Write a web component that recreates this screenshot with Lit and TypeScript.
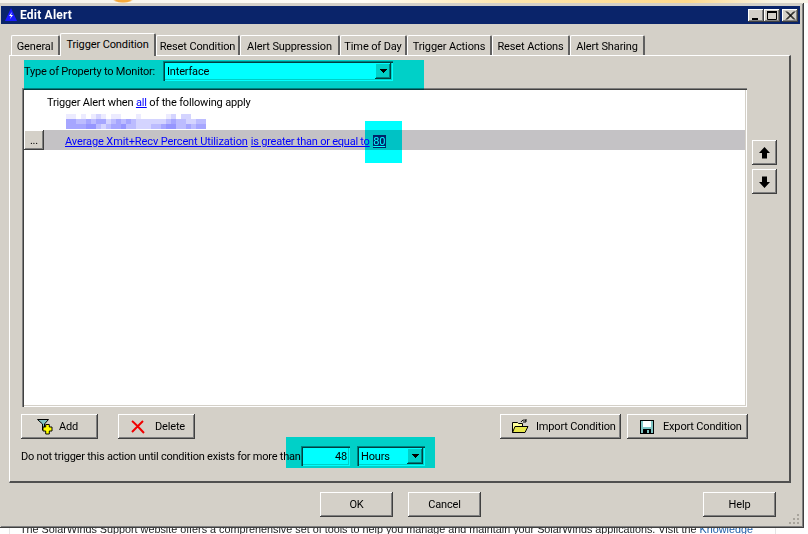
import { LitElement, html, css, svg } from "lit";
import { customElement } from "lit/decorators.js";

const TABS = [
  { label: "General", w: 49 },
  { label: "Trigger Condition", w: 96, active: true },
  { label: "Reset Condition", w: 84 },
  { label: "Alert Suppression", w: 100 },
  { label: "Time of Day", w: 67 },
  { label: "Trigger Actions", w: 85 },
  { label: "Reset Actions", w: 78 },
  { label: "Alert Sharing", w: 75 },
];

const SHADES: Record<string, string> = {
  ".": "#ffffff",
  a: "#ecebff",
  b: "#d4d4ff",
  c: "#bcbcff",
  d: "#a6a6ff",
  e: "#9696ff",
};
const MOSAIC = [
  "aa.a.aba.aa...a.....ab.bb...",
  "ddccdcddbcdcdcbbbbbbcdccbbcc",
  "ddddeecbcddeccbbbccdeeccdcdd",
];

const arrowDown = svg`<path d="M0 0h7v1h-1v1h-1v1h-1v1h-1v-1h-1v-1h-1v-1h-1z" fill="#000"/>`;

@customElement("app-root")
export class AppRoot extends LitElement {
  static styles = css`
    :host {
      display: block;
      position: relative;
      width: 808px;
      height: 534px;
      overflow: hidden;
      background: #fefefe;
      font-family: Roboto, "Liberation Sans", Arial, sans-serif;
      font-size: 11px;
      letter-spacing: -0.17px;
      color: #000;
    }
    .strip {
      height: 3px;
      background:
        radial-gradient(ellipse 10px 3px at 123px 0, #f6a93a 0 70%, transparent 100%),
        linear-gradient(90deg, #f4f1ea 0, #fffdf7 45%, #fde6ae 62%, #fed98c 85%, #f8f3e6 96%);
    }
    .window {
      box-sizing: border-box;
      width: 804px;
      height: 525px;
      padding: 3px 4px 0 1px;
      background: #d4d0c8;
      position: relative;
      box-shadow:
        inset -1px -1px #404040,
        inset 1px 0 #d4d0c8,
        inset 0 1px #d4d0c8,
        inset -2px -2px #808080;
    }
    .title {
      height: 18px;
      background: #0a246a;
      color: #fff;
      display: flex;
      align-items: center;
      padding-left: 4px;
      font-weight: bold;
      font-size: 12px;
      letter-spacing: 0.2px;
    }
    .title-text {
      margin-left: 3px;
    }
    .controls {
      margin-left: auto;
      margin-right: 2px;
      display: flex;
    }
    .ctl {
      width: 16px;
      height: 13px;
      display: flex;
    }
    .ctl.close {
      margin-left: 2px;
    }
    .raised {
      background: #d4d0c8;
      box-shadow:
        inset -1px -1px #404040,
        inset 1px 1px #ffffff,
        inset -2px -2px #808080;
    }
    .sunken {
      box-shadow:
        inset 1px 1px #808080,
        inset 2px 2px #404040,
        inset -1px -1px #ffffff,
        inset -2px -2px #d4d0c8;
    }
    .tabs {
      display: flex;
      align-items: flex-end;
      height: 22px;
      margin: 9px 0 0 10px;
      letter-spacing: -0.12px;
    }
    .tab {
      box-sizing: border-box;
      height: 20px;
      display: flex;
      align-items: center;
      justify-content: center;
      background: #d4d0c8;
      border-top: 1px solid #fff;
      border-left: 1px solid #fff;
      border-right: 2px solid #606060;
      border-top-left-radius: 2px;
      border-top-right-radius: 2px;
      white-space: nowrap;
      padding-top: 1px;
    }
    .tab.active {
      height: 23px;
      margin-bottom: -1px;
      position: relative;
      z-index: 1;
      padding-bottom: 3px;
    }
    .panel {
      box-sizing: border-box;
      width: 782px;
      height: 428px;
      margin-left: 8px;
      padding: 5px 0 0 12px;
      border-top: 1px solid #fff;
      border-left: 1px solid #fff;
      border-right: 2px solid #505050;
      border-bottom: 2px solid #505050;
    }
    .type-row {
      display: flex;
      align-items: center;
      height: 20px;
      margin-left: 2px;
    }
    .type-label {
      width: 139px;
      white-space: nowrap;
      letter-spacing: -0.2px;
    }
    .field {
      box-sizing: border-box;
      height: 20px;
      background: #fff;
      display: flex;
      align-items: center;
      padding: 0 2px 0 4px;
    }
    .combo-type {
      width: 230px;
    }
    .combo-unit {
      width: 68px;
      margin-left: 7px;
    }
    .drop {
      margin-left: auto;
      width: 16px;
      height: 16px;
      display: flex;
      align-items: center;
      justify-content: center;
    }
    .middle {
      display: flex;
      margin-top: 7px;
    }
    .list {
      box-sizing: border-box;
      width: 725px;
      height: 319px;
      padding: 2px;
      background: #fff;
    }
    .line {
      box-sizing: border-box;
      height: 22px;
      padding: 2px 0 0 23px;
      display: flex;
      align-items: center;
      white-space: nowrap;
    }
    a {
      color: #0000ff;
      text-decoration: underline;
    }
    .mosaic {
      height: 18px;
      padding: 2px 0 0 42px;
      box-sizing: border-box;
      display: grid;
      grid-template-columns: repeat(28, 5px);
      grid-auto-rows: 5px;
    }
    .rule-row {
      height: 20px;
      display: flex;
      align-items: center;
      background: #c4c2c5;
      white-space: nowrap;
    }
    .rule-text {
      display: flex;
      padding-top: 3px;
    }
    .more {
      box-sizing: border-box;
      width: 20px;
      height: 20px;
      display: flex;
      align-items: center;
      justify-content: center;
      margin-right: 21px;
    }
    .link-a {
      letter-spacing: -0.11px;
    }
    .link-b {
      margin-left: 3px;
      letter-spacing: -0.23px;
    }
    .sel {
      margin-left: 3px;
      background: #0a246a;
      color: #fff;
      text-decoration: underline;
      padding: 0 0.5px;
    }
    .side {
      display: flex;
      flex-direction: column;
      gap: 4px;
      padding: 52px 0 0 5px;
    }
    .square {
      width: 25px;
      height: 25px;
      display: flex;
      align-items: center;
      justify-content: center;
    }
    .actions {
      display: flex;
      width: 727px;
      height: 25px;
      margin: 7px 0 0 -1px;
    }
    .btn {
      box-sizing: border-box;
      height: 25px;
      display: flex;
      align-items: center;
      white-space: nowrap;
    }
    .add {
      width: 77px;
      padding-left: 15px;
      gap: 3px;
    }
    .del {
      width: 77px;
      margin-left: 20px;
      padding-left: 13px;
      gap: 10px;
    }
    .imp {
      width: 121px;
      margin-left: auto;
      padding-left: 12px;
      gap: 7px;
    }
    .exp {
      width: 121px;
      margin-left: 6px;
      padding-left: 13px;
      gap: 9px;
    }
    .delay {
      display: flex;
      align-items: center;
      height: 20px;
      margin: 7px 0 0 -1px;
    }
    .delay-label {
      width: 280px;
      white-space: nowrap;
      letter-spacing: -0.22px;
    }
    .num {
      box-sizing: border-box;
      width: 49px;
      height: 20px;
      background: #fff;
      display: flex;
      align-items: center;
      justify-content: flex-end;
      padding-right: 3px;
    }
    .foot {
      display: flex;
      padding: 9px 0 0 319px;
    }
    .foot .btn {
      width: 73px;
      justify-content: center;
    }
    .foot .cancel {
      margin-left: 15px;
    }
    .foot .help {
      margin-left: 222px;
    }
    .grip {
      position: absolute;
      right: 4px;
      bottom: 3px;
      display: block;
    }
    .below {
      box-sizing: border-box;
      width: 767px;
      height: 6px;
      margin-left: 9px;
      overflow: hidden;
      display: flex;
      border-left: 1px solid #e4e4e4;
      border-right: 1px solid #e4e4e4;
    }
    .below-text {
      margin: -6px 0 0 10px;
      font-family: "Liberation Sans", Arial, sans-serif;
      font-size: 10.8px;
      letter-spacing: 0;
      line-height: 14px;
      white-space: nowrap;
      color: #222;
    }
    .below-text a {
      color: #1d5da8;
      text-decoration: none;
    }
    .mark {
      position: absolute;
      background: #00ffff;
      mix-blend-mode: multiply;
      pointer-events: none;
    }
    .m1 { left: 24px; top: 60px; width: 400px; height: 30px; }
    .m2 { left: 365px; top: 121px; width: 37px; height: 42px; }
    .m3 { left: 286px; top: 437px; width: 149px; height: 31px; }
  `;

  private drop() {
    return html`<span class="drop raised"><svg width="7" height="4" viewBox="0 0 7 4">${arrowDown}</svg></span>`;
  }

  render() {
    return html`
      <div class="strip"></div>
      <div class="window">
        <div class="title">
          <svg width="12" height="14" viewBox="0 0 12 14">
            <path d="M6 0L12 13H0z" fill="#1a1aff" />
            <path d="M7 4L4 8h2l-1 3 3-4H6z" fill="#fff" />
          </svg>
          <span class="title-text">Edit Alert</span>
          <div class="controls">
            <span class="ctl raised"><svg width="16" height="13"><rect x="4" y="9" width="6" height="2" fill="#000" /></svg></span>
            <span class="ctl raised"><svg width="16" height="13"><path d="M3.5 3.500h9v7h-9z" fill="none" stroke="#000" /><rect x="3" y="2" width="10" height="2" fill="#000" /></svg></span>
            <span class="ctl close raised"><svg width="16" height="13"><path d="M4 2.500l8 8M5 2.500l8 8M12 2.500l-8 8M13 2.500l-8 8" stroke="#000" stroke-width="1" fill="none" /></svg></span>
          </div>
        </div>
        <div class="tabs">
          ${TABS.map(
            (t) => html`<div class="tab ${t.active ? "active" : ""}" style="width:${t.w}px">${t.label}</div>`
          )}
        </div>
        <div class="panel">
          <div class="type-row">
            <span class="type-label">Type of Property to Monitor:</span>
            <div class="field sunken combo-type">Interface${this.drop()}</div>
          </div>
          <div class="middle">
            <div class="list sunken">
              <div class="line"><span>Trigger Alert when <a>all</a> of the following apply</span></div>
              <div class="mosaic">
                ${MOSAIC.flatMap((r) =>
                  [...r].map((c) => html`<span style="background:${SHADES[c]}"></span>`)
                )}
              </div>
              <div class="rule-row">
                <span class="more raised">...</span>
                <span class="rule-text">
                  <a class="link-a">Average Xmit+Recv Percent Utilization</a>
                  <a class="link-b">is greater than or equal to</a>
                  <span class="sel">80</span>
                </span>
              </div>
            </div>
            <div class="side">
              <div class="square raised">
                <svg width="11" height="12" viewBox="0 0 11 12"><path d="M5.500 0L11 6H8v5.500H3V6H0z" fill="#000" /></svg>
              </div>
              <div class="square raised">
                <svg width="11" height="12" viewBox="0 0 11 12"><path d="M5.500 12L11 6H8V.5H3V6H0z" fill="#000" /></svg>
              </div>
            </div>
          </div>
          <div class="actions">
            <div class="btn raised add">
              <svg width="20" height="17" viewBox="0 0 20 17">
                <path d="M1.500 1.500h11L8.500 6v5l-2 1V6z" fill="#7fc4c4" stroke="#000" />
                <path d="M10 9h3V6.500h4V9h3v4h-3v3h-4v-3h-3z" transform="translate(-2 0) scale(.9 1)" fill="#ffff00" stroke="#000" />
              </svg>
              <span>Add</span>
            </div>
            <div class="btn raised del">
              <svg width="14" height="14" viewBox="0 0 14 14">
                <path d="M1 1c4 3 8 8 12 12M12 1C8 5 5 8 1 12" stroke="#f00000" stroke-width="2" fill="none" />
              </svg>
              <span>Delete</span>
            </div>
            <div class="btn raised imp">
              <svg width="17" height="15" viewBox="0 0 17 15">
                <path d="M.5 3.500h5l1 1h4v9H.5z" fill="#ffff99" stroke="#000" />
                <path d="M3 7.500h13l-3 6H.500z" fill="#e8e84c" stroke="#000" />
                <path d="M9 3c1-2 3-2.500 5-1.500M14 0v3h-3" fill="none" stroke="#000" />
              </svg>
              <span>Import Condition</span>
            </div>
            <div class="btn raised exp">
              <svg width="14" height="14" viewBox="0 0 14 14">
                <rect x=".5" y=".5" width="13" height="13" fill="#7fc4c4" stroke="#000" />
                <rect x="3" y="1" width="8" height="6" fill="#fff" />
                <rect x="3" y="9" width="8" height="5" fill="#000" />
                <rect x="7" y="10" width="2" height="3" fill="#7fc4c4" />
              </svg>
              <span>Export Condition</span>
            </div>
          </div>
          <div class="delay">
            <span class="delay-label">Do not trigger this action until condition exists for more than</span>
            <div class="num sunken">48</div>
            <div class="field sunken combo-unit">Hours${this.drop()}</div>
          </div>
        </div>
        <div class="foot">
          <div class="btn raised">OK</div>
          <div class="btn raised cancel">Cancel</div>
          <div class="btn raised help">Help</div>
        </div>
        <svg class="grip" width="12" height="12" viewBox="0 0 12 12">
          <path d="M9 1h2v2H9zM5 5h2v2H5zM9 5h2v2H9zM1 9h2v2H1zM5 9h2v2H5zM9 9h2v2H9z" fill="#a8a49c" />
        </svg>
      </div>
      <div class="below">
        <div class="below-text">The SolarWinds Support website offers a comprehensive set of tools to help you manage and maintain your SolarWinds applications. Visit the <a>Knowledge</a></div>
      </div>
      <div class="mark m1"></div>
      <div class="mark m2"></div>
      <div class="mark m3"></div>
    `;
  }
}
